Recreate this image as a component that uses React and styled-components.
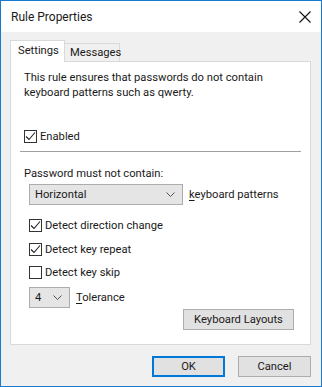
import React from 'react'
import styled, { createGlobalStyle } from 'styled-components'

const Global = createGlobalStyle`
  html, body { margin: 0; padding: 0; background: #fff; }
  * { box-sizing: border-box; }
`

const Window = styled.div`
  width: 322px;
  height: 387px;
  border: 1px solid #1a7ad0;
  background: #f0f0f0;
  font-family: Roboto, "Liberation Sans", Arial, sans-serif;
  font-size: 11.2px;
  color: #1a1a1a;
  display: flex;
  flex-direction: column;
`

const TitleBar = styled.div`
  height: 31px;
  background: #fff;
  display: flex;
  align-items: center;
  justify-content: space-between;
  padding: 0 10px 0 10px;
  font-size: 12px;
`

const Body = styled.div`
  padding: 8px 10px 0 9px;
  flex: 1;
  display: flex;
  flex-direction: column;
`

const Tabs = styled.div`
  display: flex;
  align-items: flex-end;
  height: 22px;
  position: relative;
  z-index: 1;
`

const Tab = styled.div`
  height: ${p => (p.$active ? '22px' : '19px')};
  padding: ${p => (p.$active ? '3px 0 0 7px' : '2px 0 0 5px')};
  background: ${p => (p.$active ? '#fff' : '#f0f0f0')};
  border: 1px solid #d9d9d9;
  border-bottom: ${p => (p.$active ? 'none' : '1px solid #d9d9d9')};
  margin-left: ${p => (p.$active ? '0' : '-1px')};
  width: ${p => p.$w}px;
`

const Panel = styled.div`
  margin-top: -1px;
  width: 301px;
  height: 284px;
  background: #fff;
  border: 1px solid #d9d9d9;
  padding: 8px 13px 0 13px;
  display: flex;
  flex-direction: column;
`

const Para = styled.p`
  margin: 0;
  line-height: 15px;
`

const CheckRow = styled.label`
  display: flex;
  align-items: center;
  gap: 3px;
  height: 15px;
  margin-top: ${p => p.$mt || 0}px;
  margin-left: ${p => p.$ml || 0}px;
`

const Box = styled.span`
  width: 13px;
  height: 13px;
  border: 1px solid #333;
  background: #fff;
  display: inline-flex;
  align-items: center;
  justify-content: center;
`

const Separator = styled.div`
  height: 1px;
  background: #a0a0a0;
  margin: 7px 0 0 -4px;
  width: 281px;
`

const Label = styled.div`
  margin-top: ${p => p.$mt || 0}px;
  line-height: 15px;
`

const SelectRow = styled.div`
  display: flex;
  align-items: center;
  gap: 6px;
  margin-top: ${p => p.$mt || 0}px;
  margin-left: 5px;
`

const Select = styled.div`
  width: ${p => p.$w}px;
  height: ${p => p.$h || 21}px;
  background: #e5e5e5;
  border: 1px solid #acacac;
  display: flex;
  align-items: center;
  justify-content: space-between;
  padding: 0 7px 0 5px;
`

const U = styled.span`
  text-decoration: underline;
  text-underline-offset: 2px;
`

const RightRow = styled.div`
  display: flex;
  justify-content: flex-end;
  margin-top: 1px;
  padding-right: 3px;
`

const Button = styled.div`
  width: ${p => p.$w}px;
  height: 21px;
  background: #e1e1e1;
  border: ${p => (p.$primary ? '2px solid #0078d7' : '1px solid #adadad')};
  display: flex;
  align-items: center;
  justify-content: center;
`

const Footer = styled.div`
  display: flex;
  justify-content: flex-end;
  gap: 13px;
  padding-top: 11px;
`

const Check = ({ checked }) => (
  <Box>
    {checked && (
      <svg width="11" height="11" viewBox="0 0 11 11">
        <path d="M1 5.5 L4 8.5 L10 1.5" fill="none" stroke="#222" strokeWidth="1.1" />
      </svg>
    )}
  </Box>
)

const Chevron = () => (
  <svg width="9" height="6" viewBox="0 0 9 6">
    <path d="M0.5 0.5 L4.5 4.5 L8.5 0.5" fill="none" stroke="#555" strokeWidth="1" />
  </svg>
)

const App = () => {
  return (
    <Window>
      <Global />
      <TitleBar>
        <span>Rule Properties</span>
        <svg width="12" height="12" viewBox="0 0 12 12">
          <path d="M0.5 0.5 L11.5 11.5 M11.5 0.5 L0.5 11.5" stroke="#111" strokeWidth="1.1" />
        </svg>
      </TitleBar>
      <Body>
        <Tabs>
          <Tab $active $w={55}>Settings</Tab>
          <Tab $w={56}>Messages</Tab>
        </Tabs>
        <Panel>
          <Para>
            This rule ensures that passwords do not contain
            <br />
            keyboard patterns such as qwerty.
          </Para>
          <CheckRow $mt={29}>
            <Check checked />
            <span>Enabled</span>
          </CheckRow>
          <Separator />
          <Label $mt={14}>Password must not contain:</Label>
          <SelectRow $mt={3}>
            <Select $w={154}>
              <span>Horizontal</span>
              <Chevron />
            </Select>
            <span>
              <U>k</U>eyboard patterns
            </span>
          </SelectRow>
          <CheckRow $mt={13} $ml={5}>
            <Check checked />
            <span>Detect direction change</span>
          </CheckRow>
          <CheckRow $mt={9} $ml={5}>
            <Check checked />
            <span>Detect key repeat</span>
          </CheckRow>
          <CheckRow $mt={8} $ml={5}>
            <Check />
            <span>Detect key skip</span>
          </CheckRow>
          <SelectRow $mt={7}>
            <Select $w={41}>
              <span>4</span>
              <Chevron />
            </Select>
            <span>
              <U>T</U>olerance
            </span>
          </SelectRow>
          <RightRow>
            <Button $w={111}>Keyboard Layouts</Button>
          </RightRow>
        </Panel>
        <Footer>
          <Button $primary $w={73}>OK</Button>
          <Button $w={73}>Cancel</Button>
        </Footer>
      </Body>
    </Window>
  )
}

export default App
